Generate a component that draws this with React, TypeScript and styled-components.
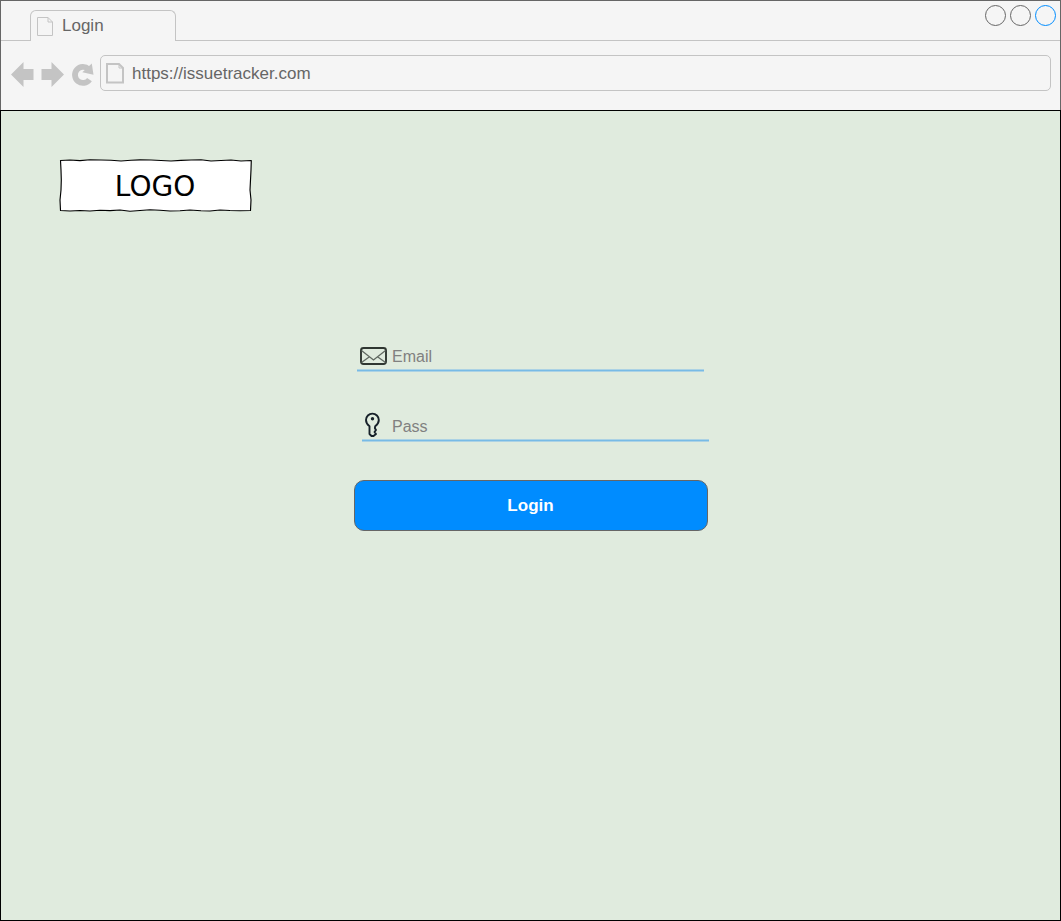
import React from "react";
import styled, { createGlobalStyle } from "styled-components";

const GlobalStyle = createGlobalStyle`
  *, *::before, *::after { box-sizing: border-box; }
  html, body { margin: 0; padding: 0; }
  body { font-family: "Liberation Sans", Arial, sans-serif; background: #f5f5f5; }
  svg { display: block; flex: none; overflow: visible; }
`;

const Window = styled.div`
  display: flex;
  flex-direction: column;
  width: 1061px;
  height: 921px;
  overflow: hidden;
`;

const Chrome = styled.header`
  height: 110px;
  flex: none;
  background: #f5f5f5;
  border: 1px solid #666;
  border-bottom: 0;
`;

const TabStrip = styled.div`
  display: flex;
  height: 40px;
`;

const StripLine = styled.div<{ $width?: number }>`
  ${(p) => (p.$width ? `width: ${p.$width}px;` : "flex: 1;")}
  border-bottom: 1px solid #c4c4c4;
`;

const Tab = styled.div`
  display: flex;
  align-items: flex-start;
  width: 146px;
  height: 31px;
  margin-top: 9px;
  padding: 6px 0 0 6px;
  gap: 9px;
  border: 1px solid #c4c4c4;
  border-bottom: 0;
  border-radius: 6px 6px 0 0;
`;

const TabTitle = styled.span`
  margin-top: -1px;
  font-size: 17px;
  line-height: 20px;
  color: #666;
`;

const WindowControls = styled(StripLine)`
  display: flex;
  justify-content: flex-end;
  gap: 4px;
  padding: 4px 4px 0 0;
`;

const ControlDot = styled.span<{ $color: string }>`
  width: 21px;
  height: 21px;
  border: 1px solid ${(p) => p.$color};
  border-radius: 50%;
`;

const Toolbar = styled.div`
  display: flex;
  align-items: flex-start;
  padding: 14px 9px 0 10px;
`;

const NavIcons = styled.div`
  display: flex;
  width: 89px;
  padding-top: 6px;
`;

const AddressBar = styled.div`
  display: flex;
  align-items: center;
  flex: 1;
  height: 36px;
  padding-left: 5px;
  gap: 8px;
  border: 1px solid #c4c4c4;
  border-radius: 5px;
`;

const Address = styled.span`
  margin-top: 2px;
  font-size: 17px;
  line-height: 20px;
  color: #666;
`;

const Page = styled.main`
  flex: 1;
  display: flex;
  flex-direction: column;
  align-items: flex-start;
  padding: 48px 0 0 58px;
  background: #e0ebde;
  border: 1px solid #000;
`;

const Logo = styled.div`
  display: grid;
  width: 193px;
  height: 53px;
  > * { grid-area: 1 / 1; }
`;

const LogoText = styled.span`
  place-self: center;
  margin: 2px 1px 0 0;
  font-family: "DejaVu Sans", sans-serif;
  font-size: 28px;
  line-height: 34px;
  color: #000;
`;

const Form = styled.form`
  display: flex;
  flex-direction: column;
  margin: 128px 0 0 295px;
`;

const Field = styled.label<{ $indent: number }>`
  display: flex;
  align-items: center;
  width: 347px;
  height: 32px;
  margin: 0 0 38px ${(p) => p.$indent}px;
  padding: 0 0 3px 2px;
  background: linear-gradient(#acd2e4 0 1px, #78bbe6 1px 2px, #acd2e4 2px 3px) left bottom / 100% 3px no-repeat;
`;

const IconSlot = styled.span<{ $width: number; $drop?: number }>`
  width: ${(p) => p.$width}px;
  padding-top: ${(p) => p.$drop ?? 0}px;
  flex: none;
`;

const Placeholder = styled.span`
  margin-top: 4px;
  font-size: 16px;
  line-height: 19px;
  color: #808080;
`;

const LoginButton = styled.button`
  width: 354px;
  height: 51px;
  padding: 0 1px 0 0;
  border: 1px solid #666;
  border-radius: 10px;
  background: #008cff;
  color: #fff;
  font: bold 17px/20px "Liberation Sans", Arial, sans-serif;
`;

const PageIcon = ({ w, h, stroke }: { w: number; h: number; stroke: number }) => {
  const o = stroke / 2;
  return (
    <svg width={w} height={h} fill="none" stroke="#c4c4c4" strokeWidth={stroke}>
      <path d={`M${o} ${o}H${w - 5}L${w - o} 5V${h - o}H${o}Z`} />
      <path d={`M${w - 5} ${o}V5H${w - o}`} strokeWidth="1" />
    </svg>
  );
};

const NavigationIcons = () => (
  <svg width="84" height="26" fill="#c4c4c4">
    <path d="M0 13.500L12.500 1V8H22.500V19H12.500V26Z" />
    <path d="M53 13.500L40.500 1V8H30.500V19H40.500V26Z" />
    <path d="M77.500 8.100A8 8 0 1 0 78.500 18.600" fill="none" stroke="#c4c4c4" strokeWidth="5.800" />
    <path d="M80.800 2.500L82.500 13.700L71.300 11.200Z" />
  </svg>
);

const SketchFrame = () => (
  <svg width="193" height="53" fill="#fff" stroke="#000" strokeWidth="1.150" strokeLinejoin="round">
    <path d="M1.500 1.500L11 1L21 1.600L31 .8L42 1L52 1.200L62 2L72 1.300L81 .9L92 1L102 1.500L112 2L122 1.400L132 1L142 .8L152 2L162 1.500L172 1L182 2L192.300 1.500L192 11L191.500 21L191 31L192 41L191.500 51.500L181 51.700L171 51.500L161 51L151 52L142 51.700L131 51L121 51.700L111 52L101 51.300L91 50.700L81 51.500L71 52.200L61 51L51 51.600L41 51.300L31 52L21 51.500L11 52L1.500 51.500L1 41L2 31L2.300 21L2 11Z" />
  </svg>
);

const MailIcon = () => (
  <svg width="28" height="19" fill="none">
    <rect x="2" y="2" width="25" height="16" rx="2.500" stroke="#2f3631" strokeWidth="1.900" />
    <path d="M2.500 4.500L14.500 14L26.500 4.500M2.500 16.500L10.500 10.700M26.500 16.500L18.500 10.700" stroke="#606861" strokeWidth="1.300" />
  </svg>
);

const KeyIcon = () => (
  <svg width="18" height="26" fill="none" stroke="#17212a" strokeWidth="1.900" strokeLinejoin="round">
    <path d="M5.500 14.200C3.200 12.500 2 10.500 2 8A6.400 6.400 0 0 1 14.800 8C14.800 10.500 13.500 12.500 11.200 14.200L10.900 16.200L12 18L10.500 20L12 22L9.500 24H7.500L5.500 22Z" />
    <circle cx="8.500" cy="6.800" r="1.700" fill="#17212a" stroke="none" />
  </svg>
);

export default function App() {
  return (
    <Window>
      <GlobalStyle />
      <Chrome>
        <TabStrip>
          <StripLine $width={29} />
          <Tab>
            <PageIcon w={16} h={19} stroke={1} />
            <TabTitle>Login</TabTitle>
          </Tab>
          <WindowControls>
            <ControlDot $color="#666" />
            <ControlDot $color="#666" />
            <ControlDot $color="#008cff" />
          </WindowControls>
        </TabStrip>
        <Toolbar>
          <NavIcons><NavigationIcons /></NavIcons>
          <AddressBar>
            <PageIcon w={18} h={20.5} stroke={2} />
            <Address>https://issuetracker.com</Address>
          </AddressBar>
        </Toolbar>
      </Chrome>
      <Page>
        <Logo>
          <SketchFrame />
          <LogoText>LOGO</LogoText>
        </Logo>
        <Form onSubmit={(e) => e.preventDefault()}>
          <Field $indent={3}>
            <IconSlot $width={33} $drop={2}><MailIcon /></IconSlot>
            <Placeholder>Email</Placeholder>
          </Field>
          <Field $indent={8}>
            <IconSlot $width={28}><KeyIcon /></IconSlot>
            <Placeholder>Pass</Placeholder>
          </Field>
          <LoginButton type="submit">Login</LoginButton>
        </Form>
      </Page>
    </Window>
  );
}
